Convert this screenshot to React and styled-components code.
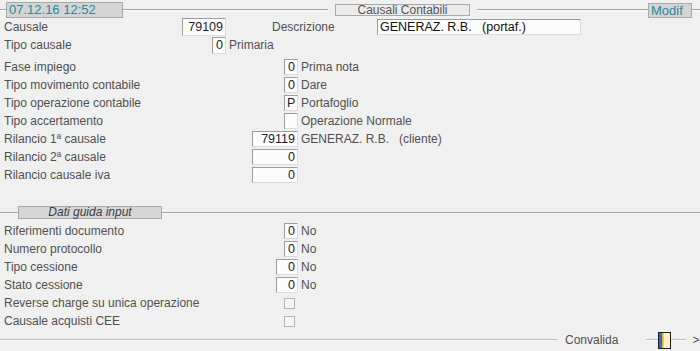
import React from "react";
import styled, { createGlobalStyle } from "styled-components";

const GlobalStyle = createGlobalStyle`
    html, body {
        margin: 0;
        padding: 0;
        background: #f0f0f0;
        overflow: hidden;
    }
    body {
        font-family: "Liberation Sans", Arial, sans-serif;
        font-size: 12px;
        color: #505050;
    }
`

//Styles
const Screen = styled.div`
    width: 700px;
    height: 351px;
    display: flex;
    flex-direction: column;
    overflow: hidden;
`
const TitleBar = styled.div`
    display: flex;
    align-items: center;
    height: 16px;
    margin-top: 2px;
`
const Rule = styled.div`
    height: 1px;
    background: ${p => p.light ? "#bdbdbd" : "#a4a4a4"};
    border-bottom: 1px solid #fafafa;
    flex: ${p => p.w ? "none" : "1"};
    width: ${p => p.w ? p.w + "px" : "auto"};
`
const TagBox = styled.div`
    box-sizing: border-box;
    flex: none;
    width: ${p => p.w}px;
    height: ${p => p.h}px;
    line-height: ${p => p.h - 2}px;
    margin: 0 ${p => p.gap || 0}px;
    border: 1px solid #a9a9a9;
    background: ${p => p.light ? "#ebebeb" : "#d4d4d4"};
    color: ${p => p.teal ? "#25899b" : "#555"};
    text-align: ${p => p.center ? "center" : "left"};
    padding-left: ${p => p.center ? 0 : 2}px;
    font-size: ${p => p.teal ? "13px" : "12px"};
    white-space: nowrap;
`
const SectionTag = styled(TagBox)`
    font-style: italic;
    color: #3c3c48;
    background: #d6d6d6;
`
const Form = styled.div`
    display: flex;
    flex-direction: column;
    padding-left: 4px;
    margin-top: ${p => p.top || 0}px;
`
const Row = styled.div`
    display: flex;
    align-items: center;
    height: 18px;
`
const FieldCell = styled.div`
    display: flex;
    align-items: center;
    flex: none;
    width: ${p => p.w}px;
    margin-left: ${p => p.left || 0}px;
`
const Label = styled.span`
    color: #505050;
    white-space: nowrap;
`
const Box = styled.div`
    box-sizing: border-box;
    margin-left: auto;
    flex: none;
    width: ${p => p.w}px;
    height: ${p => p.h || 16}px;
    line-height: ${p => (p.h || 16) - 2}px;
    border: 1px solid;
    border-color: #9c9c9c #dcdcdc #dcdcdc #9c9c9c;
    background: #fcfcfc;
    color: #1c1c2c;
    text-align: ${p => p.align || "right"};
    padding: 0 2px;
    white-space: pre;
    overflow: hidden;
    font-size: 12.5px;
`
const TextBox = styled(Box)`
    margin-left: 0;
    color: #101010;
`
const CheckBox = styled.div`
    box-sizing: border-box;
    margin-left: auto;
    margin-right: 3px;
    width: 11px;
    height: 11px;
    border: 1px solid #b4b4b4;
    background: #f6f6f6;
`
const Suffix = styled.span`
    margin-left: 3px;
    color: #505050;
    white-space: pre;
`
const SectionBar = styled.div`
    display: flex;
    align-items: center;
    height: 13px;
    margin-top: ${p => p.top}px;
`
const Footer = styled.div`
    display: flex;
    align-items: center;
    height: 18px;
    margin-top: auto;
    margin-bottom: 2px;
`
const FooterText = styled.span`
    flex: none;
    color: #505050;
    margin: 0 ${p => p.right || 0}px 0 ${p => p.left || 0}px;
    white-space: nowrap;
`
const IconSvg = styled.svg`
    flex: none;
    display: block;
`

function ConfirmIcon() {
    return (
        <IconSvg width="13" height="17" viewBox="0 0 13 17">
            <rect x="0.5" y="0.5" width="12" height="16" fill="#fff4bf" stroke="#1a1a1a" />
            <rect x="1" y="1" width="3" height="15" fill="#2a6fd6" />
            <rect x="4" y="1" width="1.5" height="15" fill="#f0a030" />
        </IconSvg>
    );
}

const topRows = [
    { label: "Fase impiego", value: "0", w: 14, text: "Prima nota" },
    { label: "Tipo movimento contabile", value: "0", w: 14, text: "Dare" },
    { label: "Tipo operazione contabile", value: "P", w: 14, text: "Portafoglio", align: "left" },
    { label: "Tipo accertamento", value: "", w: 14, text: "Operazione Normale" },
    { label: "Rilancio 1\u00aa causale", value: "79119", w: 46, text: "GENERAZ. R.B.   (cliente)" },
    { label: "Rilancio 2\u00aa causale", value: "0", w: 46 },
    { label: "Rilancio causale iva", value: "0", w: 46 }
];

const inputRows = [
    { label: "Riferimenti documento", value: "0", w: 14, text: "No" },
    { label: "Numero protocollo", value: "0", w: 14, text: "No" },
    { label: "Tipo cessione", value: "0", w: 22, text: "No" },
    { label: "Stato cessione", value: "0", w: 22, text: "No" },
    { label: "Reverse charge su unica operazione", check: true },
    { label: "Causale acquisti CEE", check: true }
];

function FieldRow({ row }) {
    return (
        <Row>
            <FieldCell w={294}>
                <Label>{row.label}</Label>
                {row.check
                    ? <CheckBox />
                    : <Box w={row.w} align={row.align}>{row.value}</Box>}
            </FieldCell>
            {row.text && <Suffix>{row.text}</Suffix>}
        </Row>
    );
}

export default function App() {
    return (
        <Screen>
            <GlobalStyle />
            <TitleBar>
                <Rule w={6} />
                <TagBox w={117} h={16} teal>07.12.16 12:52</TagBox>
                <Rule w={205} />
                <TagBox w={135} h={12} gap={7} light center>Causali Contabili</TagBox>
                <Rule w={171} />
                <TagBox w={44} h={15} teal>Modif</TagBox>
                <Rule />
            </TitleBar>

            <Form>
                <Row>
                    <FieldCell w={222}>
                        <Label>Causale</Label>
                        <Box w={44} h={18}>79109</Box>
                    </FieldCell>
                    <FieldCell w={105} left={46}>
                        <Label>Descrizione</Label>
                    </FieldCell>
                    <TextBox w={204} align="left">GENERAZ. R.B.   (portaf.)</TextBox>
                </Row>
                <Row>
                    <FieldCell w={222}>
                        <Label>Tipo causale</Label>
                        <Box w={14} h={17}>0</Box>
                    </FieldCell>
                    <Suffix>Primaria</Suffix>
                </Row>
            </Form>

            <Form top={4}>
                {topRows.map((row, index) => <FieldRow key={index} row={row} />)}
            </Form>

            <SectionBar top={22}>
                <Rule w={18} />
                <SectionTag w={144} h={13} center>Dati guida input</SectionTag>
                <Rule />
            </SectionBar>

            <Form top={3}>
                {inputRows.map((row, index) => <FieldRow key={index} row={row} />)}
            </Form>

            <Footer>
                <Rule w={557} light />
                <FooterText left={8} right={28}>Convalida</FooterText>
                <Rule w={12} light />
                <ConfirmIcon />
                <Rule w={15} light />
                <FooterText left={6}>&gt;</FooterText>
            </Footer>
        </Screen>
    );
}
